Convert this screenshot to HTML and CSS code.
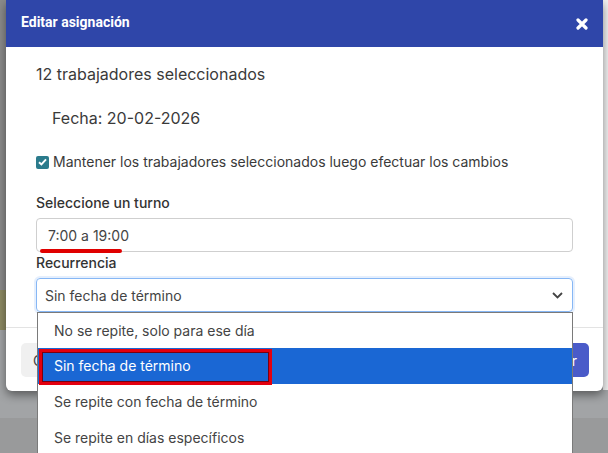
FILE: index.html
```html
<!DOCTYPE html>
<html lang="es">
<head>
<meta charset="utf-8">
<title>Editar asignación</title>
<link rel="stylesheet" href="styles.css">
</head>
<body>
<div class="modal">
  <div class="modal-header">
    <span class="modal-title">Editar asignación</span>
    <svg class="close" width="12" height="12" viewBox="0 0 12 12" aria-hidden="true">
      <path d="M2 2 L10 10 M10 2 L2 10" stroke="#fff" stroke-width="3.2" stroke-linecap="round"/>
    </svg>
  </div>
  <div class="modal-body">
    <p class="count">12 trabajadores seleccionados</p>
    <p class="fecha">Fecha: 20-02-2026</p>
    <label class="check">
      <span class="box">
        <svg width="9" height="8" viewBox="0 0 9 8" aria-hidden="true"><path d="M1 4.2 L3.4 6.5 L8 1.3" fill="none" stroke="#fff" stroke-width="1.9"/></svg>
      </span>
      Mantener los trabajadores seleccionados luego efectuar los cambios
    </label>
    <div class="field-label">Seleccione un turno</div>
    <div class="input">
      7:00 a 19:00
      <span class="underline"></span>
    </div>
    <div class="field-label">Recurrencia</div>
    <div class="select">
      <span>Sin fecha de término</span>
      <svg width="11" height="7" viewBox="0 0 11 7" aria-hidden="true"><path d="M1 1 L5.5 5.5 L10 1" fill="none" stroke="#444" stroke-width="1.8"/></svg>
      <ul class="dropdown">
        <li>No se repite, solo para ese día</li>
        <li class="active"><span class="mark"></span>Sin fecha de término</li>
        <li>Se repite con fecha de término</li>
        <li>Se repite en días específicos</li>
      </ul>
    </div>
  </div>
  <div class="modal-footer">
    <button class="btn btn-secondary">Cancelar</button>
    <button class="btn btn-primary">Guardar</button>
  </div>
</div>
</body>
</html>
```

FILE: styles.css
```css
html, body {
  margin: 0;
  height: 453px;
  overflow: hidden;
}
body {
  font-family: Inter, "Liberation Sans", sans-serif;
  background:
    linear-gradient(#f1f1f1, #f1f1f1) right top / 5px 390px no-repeat,
    linear-gradient(to bottom, #8b8b8b 0, #8b8b8b 290px, #8d8a63 290px, #8d8a63 330px, #a2a4a6 330px, #a2a4a6 418px, #999a9b 418px);
  padding-left: 6px;
}
.modal {
  width: 597px;
  background: #fff;
  border-radius: 0 0 6px 6px;
  box-shadow: 0 4px 10px rgba(0, 0, 0, 0.45);
  position: relative;
}
.modal-header {
  height: 47px;
  background: #2f46a9;
  display: flex;
  align-items: center;
  justify-content: space-between;
  padding: 0 15px 0 15px;
  box-sizing: border-box;
}
.modal-title {
  font-family: Roboto, "Liberation Sans", sans-serif;
  font-weight: 700;
  font-size: 14px;
  color: #fff;
  margin-top: -4px;
}
.modal-body {
  padding: 15px 30px 15px 30px;
  color: #3a3a3a;
}
.count {
  margin: 0;
  font-size: 16px;
  line-height: 24px;
}
.fecha {
  margin: 20px 0 0 16px;
  font-size: 16px;
  line-height: 24px;
}
.check {
  margin-top: 22px;
  display: flex;
  align-items: center;
  gap: 4px;
  font-size: 14px;
  line-height: 20px;
}
.box {
  width: 13px;
  height: 13px;
  border-radius: 2px;
  background: #2b7b8c;
  display: flex;
  align-items: center;
  justify-content: center;
}
.field-label {
  font-size: 14px;
  line-height: 20px;
  font-weight: 500;
  color: #333;
  margin-top: 21px;
}
.input + .field-label {
  margin-top: 1px;
}
.input, .select {
  margin-top: 5px;
  height: 34px;
  box-sizing: border-box;
  border: 1px solid #cfcfcf;
  border-radius: 4px;
  font-size: 14px;
  color: #444;
  display: flex;
  align-items: center;
  position: relative;
}
.input {
  padding-left: 11px;
}
.underline {
  position: absolute;
  left: 3px;
  top: 30px;
  width: 82px;
  height: 4px;
  border-radius: 2px;
  background: #e00000;
}
.select {
  border-color: #86b7f5;
  box-shadow: 0 0 0 2px rgba(80, 150, 240, 0.15);
  padding: 0 8px 0 8px;
  justify-content: space-between;
}
.select svg {
  margin-right: 1px;
}
.dropdown {
  position: absolute;
  left: 0;
  top: 33px;
  width: 536px;
  margin: 0;
  padding: 0;
  list-style: none;
  background: #fff;
  border: 1px solid #7a7a7a;
  border-bottom: none;
  box-sizing: border-box;
  z-index: 5;
}
.dropdown li {
  height: 36px;
  line-height: 36px;
  padding-left: 16px;
  font-size: 14px;
  color: #444;
  position: relative;
}
.dropdown li:first-child {
  height: 35px;
  line-height: 35px;
}
.dropdown li:last-child {
  height: 34px;
}
.dropdown li.active {
  background: #1a67d4;
  color: #fff;
}
.mark {
  position: absolute;
  left: 1px;
  top: 1px;
  width: 233px;
  height: 36px;
  box-sizing: border-box;
  border: 3px solid #e3000f;
  box-shadow: inset 0 0 0 1px #7a0010;
}
.modal-footer {
  border-top: 1px solid #e3e3e3;
  padding: 15px 14px 14px 15px;
  display: flex;
  justify-content: space-between;
}
.btn {
  height: 34px;
  border: none;
  border-radius: 5px;
  font-family: Inter, "Liberation Sans", sans-serif;
  font-size: 14px;
  padding: 0 12px;
}
.btn-secondary {
  background: #f0f0f0;
  color: #444;
}
.btn-primary {
  background: #4a5bc9;
  color: #fff;
}
```
